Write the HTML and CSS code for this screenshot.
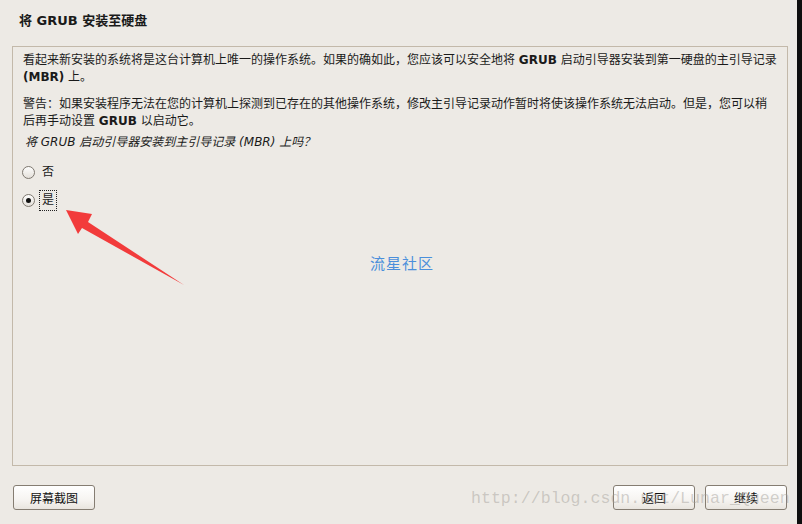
FILE: index.html
```html
<!DOCTYPE html>
<html lang="zh-CN">
<head>
    <meta charset="UTF-8">
    <title>将 GRUB 安装至硬盘</title>
    <link rel="stylesheet" href="styles.css">
</head>
<body>
    <div class="window">
        <h1 class="title">将 GRUB 安装至硬盘</h1>

        <div class="panel">
            <p>看起来新安装的系统将是这台计算机上唯一的操作系统。如果的确如此，您应该可以安全地将 <b>GRUB</b> 启动引导器安装到第一硬盘的主引导记录 <b>(MBR)</b> 上。</p>
            <p class="warn">警告：如果安装程序无法在您的计算机上探测到已存在的其他操作系统，修改主引导记录动作暂时将使该操作系统无法启动。但是，您可以稍后再手动设置 <b>GRUB</b> 以启动它。</p>
            <p class="question">将 GRUB 启动引导器安装到主引导记录 (MBR) 上吗？</p>

            <div class="choices">
                <label class="choice"><span class="radio"></span><span class="label">否</span></label>
                <label class="choice"><span class="radio checked"></span><span class="label focus">是</span></label>
            </div>

            <div class="brand">流星社区</div>

            <!-- 标注箭头 -->
            <svg class="arrow" width="200" height="100" viewBox="0 0 200 100">
                <polygon points="53,10 79,14 75,22 171,85 69,28 65,34" fill="#f23b3b"/>
            </svg>
        </div>

        <div class="buttons">
            <button class="btn">屏幕截图</button>
            <div class="spacer"></div>
            <button class="btn">返回</button>
            <button class="btn">继续</button>
        </div>

        <div class="watermark">http://blog.csdn.net/Lunar_Queen</div>
    </div>
</body>
</html>
```

FILE: styles.css
```css
html, body {
    margin: 0;
    padding: 0;
    background-color: #0e0e0e;
}
body {
    font-family: "DejaVu Sans", "Noto Sans CJK SC", sans-serif;
    font-size: 12px;
    color: #1a1a1a;
}
.window {
    position: relative;
    width: 797px;
    height: 524px;
    background-color: #edeae5;
    overflow: hidden;
}
.title {
    margin: 0;
    padding: 12px 0 0 19px;
    height: 34px;
    font-size: 13px;
    line-height: 17px;
    font-weight: bold;
}
.panel {
    position: relative;
    margin-left: 12px;
    width: 774px;
    height: 418px;
    border: 1px solid #c3b9aa;
    padding: 0;
    box-sizing: content-box;
}
.panel p {
    margin: 0;
    padding: 0 10px;
    line-height: 17px;
}
.panel p:first-child {
    padding-top: 5px;
}
.panel p b {
    font-weight: bold;
}
.panel .warn {
    margin-top: 10px;
}
.panel .question {
    margin-top: 4px;
    padding-left: 12px;
    font-style: italic;
}
.choices {
    margin-top: 7px;
    padding-left: 9px;
}
.choice {
    display: flex;
    align-items: center;
    height: 28px;
}
.radio {
    width: 11px;
    height: 11px;
    border: 1px solid #7e7870;
    border-radius: 50%;
    background: linear-gradient(#fdfdfc, #e4e0da);
    display: flex;
    align-items: center;
    justify-content: center;
}
.radio.checked::after {
    content: "";
    width: 5px;
    height: 5px;
    border-radius: 50%;
    background-color: #111;
}
.label {
    margin-left: 4px;
    padding: 2px 2px;
    line-height: 15px;
    border: 1px solid transparent;
}
.label.focus {
    border: 1px dotted #222;
}
.brand {
    position: absolute;
    left: 357px;
    top: 205px;
    font-size: 15px;
    color: #4b8fdb;
    letter-spacing: 1px;
}
.arrow {
    position: absolute;
    left: 0;
    top: 153px;
}
.buttons {
    display: flex;
    gap: 10px;
    margin: 19px 0 0 13px;
    width: 774px;
}
.spacer {
    flex: 1;
}
.btn {
    width: 82px;
    height: 25px;
    font-family: "DejaVu Sans", "Noto Sans CJK SC", sans-serif;
    font-size: 12px;
    color: #111;
    border: 1px solid #857d72;
    border-radius: 3px;
    background: linear-gradient(#ffffff, #f6f4f1 60%, #e9e5df);
    padding: 0;
}
.watermark {
    position: absolute;
    left: 471px;
    top: 489px;
    font-family: "Liberation Mono", monospace;
    font-size: 16.6px;
    color: rgba(160, 156, 150, 0.45);
    pointer-events: none;
}
```
